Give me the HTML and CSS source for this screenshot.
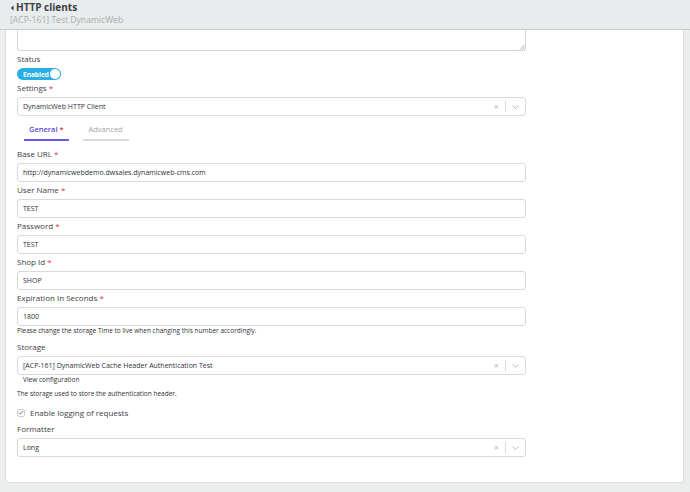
FILE: index.html
```html
<!DOCTYPE html>
<html>
<head>
<meta charset="utf-8">
<link rel="stylesheet" href="styles.css">
</head>
<body>
<header class="topbar">
  <div class="title-row">
    <svg class="back" width="4" height="6" viewBox="0 0 4 6"><path d="M3.5 0.5 L0.8 3 L3.5 5.5 Z" fill="#3b3f42"/></svg>
    <span class="title">HTTP clients</span>
  </div>
  <div class="subtitle">[ACP-161] Test DynamicWeb</div>
</header>
<main class="main">
  <section class="card">
    <div class="textarea">
      <svg class="grip" width="6" height="6" viewBox="0 0 6 6"><path d="M1 5.5 L5.5 1 M3.5 5.5 L5.5 3.5" stroke="#9a9a9a" stroke-width="0.8"/></svg>
    </div>

    <div class="label">Status</div>
    <div class="toggle"><span class="toggle-text">Enabled</span><span class="knob"></span></div>

    <div class="label">Settings <span class="req">*</span></div>
    <div class="select">
      <span class="value">DynamicWeb HTTP Client</span>
      <span class="sel-icons"><span class="clear">×</span><span class="sep"></span><svg class="chev" width="7" height="4" viewBox="0 0 7 4"><path d="M0.5 0.5 L3.5 3.3 L6.5 0.5" fill="none" stroke="#b5b5b5" stroke-width="0.9"/></svg></span>
    </div>

    <nav class="tabs">
      <div class="tab active">General <span class="req">*</span></div>
      <div class="tab">Advanced</div>
    </nav>

    <div class="label tab-gap">Base URL <span class="req">*</span></div>
    <div class="input">http://dynamicwebdemo.dwsales.dynamicweb-cms.com</div>

    <div class="label">User Name <span class="req">*</span></div>
    <div class="input">TEST</div>

    <div class="label">Password <span class="req">*</span></div>
    <div class="input">TEST</div>

    <div class="label">Shop Id <span class="req">*</span></div>
    <div class="input">SHOP</div>

    <div class="label">Expiration In Seconds <span class="req">*</span></div>
    <div class="input">1800</div>
    <div class="help">Please change the storage Time to live when changing this number accordingly.</div>

    <div class="label gap-storage">Storage</div>
    <div class="select">
      <span class="value">[ACP-161] DynamicWeb Cache Header Authentication Test</span>
      <span class="sel-icons"><span class="clear">×</span><span class="sep"></span><svg class="chev" width="7" height="4" viewBox="0 0 7 4"><path d="M0.5 0.5 L3.5 3.3 L6.5 0.5" fill="none" stroke="#b5b5b5" stroke-width="0.9"/></svg></span>
    </div>
    <div class="link">View configuration</div>
    <div class="help gap4">The storage used to store the authentication header.</div>

    <div class="check-row">
      <span class="checkbox"><svg width="6" height="5" viewBox="0 0 6 5"><path d="M0.8 2.6 L2.3 4 L5.2 1" fill="none" stroke="#555" stroke-width="0.8"/></svg></span>
      <span class="check-label">Enable logging of requests</span>
    </div>

    <div class="label">Formatter</div>
    <div class="select">
      <span class="value">Long</span>
      <span class="sel-icons"><span class="clear">×</span><span class="sep"></span><svg class="chev" width="7" height="4" viewBox="0 0 7 4"><path d="M0.5 0.5 L3.5 3.3 L6.5 0.5" fill="none" stroke="#b5b5b5" stroke-width="0.9"/></svg></span>
    </div>
  </section>
</main>
</body>
</html>
```
FILE: styles.css
```css
html, body {
  margin: 0;
  padding: 0;
  height: 492px;
  overflow: hidden;
  background: #eceeee;
  font-family: "Open Sans", "Liberation Sans", sans-serif;
  color: #3c4146;
}

.topbar {
  height: 29px;
  background: #e9ecec;
  border-bottom: 1px solid #c9cccc;
  padding-left: 10px;
  box-sizing: content-box;
}

.title-row {
  display: flex;
  align-items: center;
  gap: 2px;
  height: 14px;
}

.back { margin-top: 1px; }

.title {
  font-size: 10px;
  font-weight: 700;
  color: #3b3f42;
  line-height: 14px;
}

.subtitle {
  font-size: 8.6px;
  line-height: 12px;
  color: #a8acad;
}

.main {
  padding: 0 6px 10px 5px;
}

.card {
  background: #ffffff;
  border: 1px solid #dcdfdf;
  border-top: none;
  border-radius: 0 0 4px 4px;
  padding: 0 0 25px 11px;
  height: 427px;
  box-sizing: content-box;
}

.textarea {
  width: 509px;
  height: 21px;
  box-sizing: border-box;
  border: 1px solid #d3d5d5;
  border-top: none;
  border-radius: 0 0 3px 3px;
  position: relative;
}

.grip {
  position: absolute;
  right: 0;
  bottom: 0;
}

.label {
  font-size: 8px;
  line-height: 15px;
  height: 15px;
  margin-bottom: 2px;
  color: #3c4146;
}

.req { color: #e0343b; }

.toggle {
  width: 44px;
  height: 12px;
  border-radius: 6px;
  background: #2aaee4;
  display: flex;
  align-items: center;
  justify-content: space-between;
  padding: 0 1px 0 6px;
  box-sizing: border-box;
}

.toggle-text {
  color: #ffffff;
  font-size: 6.5px;
  font-weight: 700;
}

.knob {
  width: 10px;
  height: 10px;
  border-radius: 50%;
  background: #ffffff;
}

.select, .input {
  width: 509px;
  height: 19px;
  box-sizing: border-box;
  border: 1px solid #d8dada;
  border-radius: 3px;
  display: flex;
  align-items: center;
  padding-left: 5px;
  font-size: 7px;
  color: #2e3236;
}

.select .value { flex: 1; }

.sel-icons {
  display: flex;
  align-items: center;
  gap: 6px;
  padding-right: 6px;
}

.clear {
  color: #b9b9b9;
  font-size: 9px;
  line-height: 9px;
}

.sep {
  width: 1px;
  height: 11px;
  background: #dcdcdc;
}

.tabs {
  display: flex;
  gap: 14px;
  padding-left: 7px;
  margin-top: 6px;
}

.tab {
  font-size: 7.5px;
  line-height: 15px;
  padding: 0 5px 2px 5px;
  min-width: 46px;
  text-align: center;
  box-sizing: border-box;
  color: #a3a6a8;
  border-bottom: 2px solid #dadcdc;
}

.tab.active {
  color: #5a4bdb;
  font-weight: 600;
  border-bottom-color: #6758ea;
  min-width: 43px;
}

.tab-gap { margin-top: 5px; }

.help {
  font-size: 6.5px;
  line-height: 10px;
  color: #2e3236;
}

.gap-storage { margin-top: 3px; }
.gap4 { margin-top: 4px; }

.link {
  font-size: 6.5px;
  line-height: 10px;
  padding-left: 6px;
  color: #2e3236;
}

.check-row {
  display: flex;
  align-items: center;
  gap: 5px;
  height: 17px;
  margin-top: 5px;
}

.checkbox {
  width: 8px;
  height: 8px;
  border: 1px solid #cfd1d1;
  border-radius: 2px;
  box-sizing: border-box;
  display: flex;
  align-items: center;
  justify-content: center;
}

.check-label {
  font-size: 8px;
  color: #3c4146;
}
```
